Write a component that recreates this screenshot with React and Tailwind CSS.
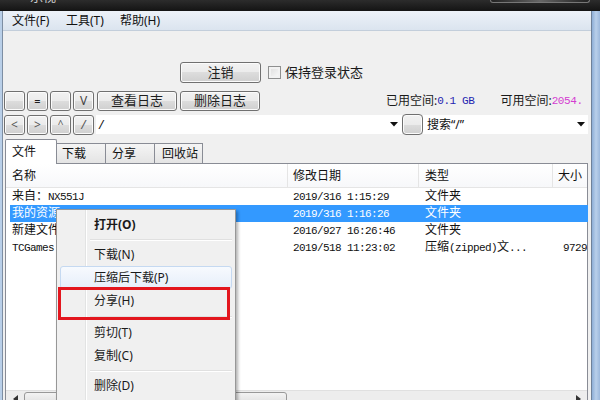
import React from 'react';

const ui = "font-['Noto_Sans','Noto_Sans_CJK_SC',sans-serif]";
const mono = "font-['Liberation_Mono','Noto_Sans_CJK_SC',monospace]";
const btnBg = 'bg-[linear-gradient(#f2f2f2,#ebebeb_50%,#dddddd_50%,#cfcfcf)]';

function Btn({ w, children, className = '' }) {
  return (
    <div className={`flex items-center justify-center shrink-0 rounded-[3px] border border-[#707070] ${btnBg} shadow-[inset_0_0_0_1px_#fbfbfb] text-[#1e1e1e] ${w} ${className}`}>
      {children}
    </div>
  );
}

function Arrow() {
  return (
    <svg width="8" height="5" viewBox="0 0 8 5" className="shrink-0">
      <polygon points="0,0 8,0 4,4.5" fill="#111" />
    </svg>
  );
}

function M({ children }) {
  return <span className="text-[11px] tracking-[-0.6px]">{children}</span>;
}

const rows = [
  { name: <>来自：<M>NX551J</M></>, date: '2019/316 1:15:29', type: '文件夹', size: '' },
  { name: '我的资源', date: '2019/316 1:16:26', type: '文件夹', size: '', sel: true },
  { name: '新建文件夹', date: '2016/927 16:26:46', type: '文件夹', size: '' },
  { name: <M>TCGames.zip</M>, date: '2019/518 11:23:02', type: <>压缩<M>(zipped)</M>文<M>...</M></>, size: '9729' },
];

function MenuItem({ children, bold, hover }) {
  return (
    <div className="h-[23px] px-[3px] flex">
      <div className={`flex-1 flex items-center pl-[33px] rounded-[3px] border ${hover ? 'border-[#c5d9f1] bg-linear-to-b from-[#f7fafe] to-[#e6eefa]' : 'border-transparent'}`}>
        <span className={`text-[12px] text-[#1a1a1a] ${bold ? 'font-bold' : ''}`}>{children}</span>
      </div>
    </div>
  );
}

function Sep({ h }) {
  return (
    <div className={`${h} flex items-center pl-[33px] pr-[3px]`}>
      <div className="flex-1 h-[2px] border-t border-[#e0e0e0] border-b border-b-white" />
    </div>
  );
}

export default function App() {
  return (
    <div className={`w-[600px] h-[400px] overflow-hidden relative bg-[#a9c3e2] flex flex-col ${ui}`}>
      {/* title bar */}
      <div className="h-[11px] shrink-0 bg-linear-to-b from-[#2c2c2c] to-[#141414] flex overflow-hidden">
        <span className="ml-[30px] -mt-[11px] text-[13px] leading-[14px] text-[#cfcfcf]">乐视</span>
        <div className="ml-auto mr-[10px] w-[100px] h-[3px] border-x border-b border-[#777] rounded-b-[3px] bg-linear-to-r from-[#222] via-[#666] to-[#222]" />
      </div>

      <div className="flex flex-1 min-h-0">
        <div className="w-[3px] bg-[#b9cfe8] border-r border-[#7d8ea3]" />
        <div className="w-[588px] flex flex-col bg-[#f0f0f0] overflow-hidden">
          {/* menu bar */}
          <div className="h-[20px] shrink-0 flex items-center pl-[9px] bg-linear-to-b from-[#edf2f8] to-[#dbe4ef] border-b border-[#c3cedb] text-[12px] text-[#111]">
            <span className="w-[54px]">文件(F)</span>
            <span className="w-[54px]">工具(T)</span>
            <span className="w-[54px]">帮助(H)</span>
          </div>

          {/* row 1 */}
          <div className="mt-[31px] h-[21px] flex items-center pl-[177px] shrink-0">
            <Btn w="w-[81px] h-[21px]" className="text-[13px]">注销</Btn>
            <div className="ml-[7px] w-[13px] h-[13px] border border-[#8e8f8f] bg-linear-to-br from-[#dcdcdc] to-[#fbfbfb] shadow-[inset_0_0_0_2px_#f2f2f2]" />
            <span className="ml-[4px] text-[13px] text-[#1a1a1a]">保持登录状态</span>
          </div>

          {/* row 2 */}
          <div className="mt-[8px] h-[20px] flex items-center pl-[1px] shrink-0 whitespace-nowrap overflow-hidden">
            <Btn w="w-[21px] h-[20px]" />
            <Btn w="w-[21px] h-[20px]" className="ml-[2px] text-[11px]">=</Btn>
            <Btn w="w-[21px] h-[20px]" className="ml-[2px]" />
            <Btn w="w-[21px] h-[20px]" className="ml-[2px] text-[12px] text-[#444]">V</Btn>
            <Btn w="w-[80px] h-[20px]" className="ml-[3px] text-[13px]">查看日志</Btn>
            <Btn w="w-[80px] h-[20px]" className="ml-[3px] text-[13px]">删除日志</Btn>
            <span className="ml-[126px] shrink-0 text-[12px] text-[#1a1a1a]">已用空间:</span>
            <span className={`${mono} shrink-0 text-[11px] tracking-[-0.4px] text-[#2424b0]`}>0.1 GB</span>
            <span className="ml-[26px] shrink-0 text-[12px] text-[#1a1a1a]">可用空间:</span>
            <span className={`${mono} shrink-0 text-[11px] tracking-[-0.4px] text-[#d43cd0]`}>2054.</span>
          </div>

          {/* row 3 */}
          <div className="mt-[3px] h-[21px] flex items-center pl-[1px] shrink-0 whitespace-nowrap">
            <Btn w="w-[21px] h-[20px]" className="text-[12px] text-[#555]">&lt;</Btn>
            <Btn w="w-[21px] h-[20px]" className="ml-[2px] text-[12px] text-[#555]">&gt;</Btn>
            <Btn w="w-[21px] h-[20px]" className="ml-[2px] text-[10px] text-[#555]">^</Btn>
            <Btn w="w-[21px] h-[20px]" className="ml-[2px] text-[12px] text-[#555] italic">/</Btn>
            <div className="ml-[2px] w-[306px] h-[19px] bg-white flex items-center pl-[3px] pr-[4px]">
              <span className="text-[12px] italic text-[#111]">/</span>
              <div className="ml-auto"><Arrow /></div>
            </div>
            <Btn w="w-[21px] h-[21px]" className="rounded-[4px] border-[#8a8a8a]" />
            <div className="w-[165px] h-[19px] bg-white flex items-center pl-[4px] pr-[3px]">
              <span className="text-[12px] text-[#111]">搜索“/”</span>
              <div className="ml-auto"><Arrow /></div>
            </div>
          </div>

          {/* tabs */}
          <div className="mt-[3px] h-[25px] flex items-end pl-[2px] shrink-0 text-[12px] text-[#111]">
            <div className="w-[52px] h-[25px] bg-white border-x border-t border-[#898c95] rounded-t-[2px] pl-[6px] pt-[3px] relative z-10 -mb-[1px]">文件</div>
            <div className="w-[49px] h-[20px] border-t border-r border-[#898c95] bg-linear-to-b from-[#f5f5f5] to-[#e4e4e4] pl-[5px] leading-[19px]">下载</div>
            <div className="w-[49px] h-[20px] border-t border-r border-[#898c95] bg-linear-to-b from-[#f5f5f5] to-[#e4e4e4] pl-[6px] leading-[19px]">分享</div>
            <div className="w-[48px] h-[20px] border-t border-r border-[#898c95] bg-linear-to-b from-[#f5f5f5] to-[#e4e4e4] pl-[7px] leading-[19px]">回收站</div>
          </div>

          {/* list */}
          <div className="ml-[2px] w-[583px] shrink-0 bg-white border border-[#898c95] flex flex-col text-[12px] text-[#111]">
            <div className="h-[24px] flex items-center border-b border-[#e5e5e5] bg-linear-to-b from-white to-[#f7f8fa]">
              <div className="w-[282px] shrink-0 pl-[6px] border-r border-[#e5e5e5] h-full flex items-center">名称</div>
              <div className="w-[131px] shrink-0 pl-[5px] border-r border-[#e5e5e5] h-full flex items-center">修改日期</div>
              <div className="w-[134px] shrink-0 pl-[6px] border-r border-[#e5e5e5] h-full flex items-center">类型</div>
              <div className="flex-1 pl-[5px] h-full flex items-center">大小</div>
            </div>
            <div className={`${mono} flex flex-col`}>
              {rows.map((r, i) => (
                <div key={i} className={`h-[17px] flex items-center whitespace-nowrap overflow-hidden ${r.sel ? 'bg-[#3399ff] text-white ml-[4px] -mr-[1px]' : 'ml-[4px]'}`}>
                  <div className="w-[278px] shrink-0 pl-[2px] text-[12px]">{r.name}</div>
                  <div className="w-[131px] shrink-0 pl-[5px]"><M>{r.date}</M></div>
                  <div className="w-[138px] shrink-0 pl-[6px] text-[12px]">{r.type}</div>
                  <div className="flex-1 min-w-0 overflow-hidden pl-[6px]"><M>{r.size}</M></div>
                </div>
              ))}
            </div>
            <div className="h-[134px]" />
            <div className="h-[17px] flex items-center bg-[#ededed] border-t border-[#e0e0e0]">
              <div className="w-[18px] flex justify-center">
                <svg width="5" height="8" viewBox="0 0 5 8"><polygon points="5,0 5,8 0,4" fill="#333" /></svg>
              </div>
              <div className="w-[263px] h-[15px] rounded-[3px] border border-[#989898] bg-linear-to-b from-[#f3f3f3] to-[#dcdcdc]" />
              <div className="ml-auto w-[18px] flex justify-center">
                <svg width="5" height="8" viewBox="0 0 5 8"><polygon points="0,0 0,8 5,4" fill="#333" /></svg>
              </div>
            </div>
          </div>
        </div>
        <div className="flex-1 bg-linear-to-r from-[#8eaed6] via-[#b9cfea] to-[#9cb8dc] border-l border-[#6f8199]" />
      </div>

      {/* context menu */}
      <div className="absolute left-[56px] top-[209px] w-[180px] h-[200px] bg-[#f0f0f0] border border-[#979797] shadow-[2px_2px_3px_rgba(0,0,0,0.3)] pt-[3px]">
        <div className="absolute left-[28px] top-0 bottom-0 w-[2px] border-l border-[#e2e3e3] border-r border-r-white" />
        <div className="relative">
          <MenuItem bold>打开(O)</MenuItem>
          <Sep h="h-[7px]" />
          <MenuItem>下载(N)</MenuItem>
          <MenuItem hover>压缩后下载(P)</MenuItem>
          <MenuItem>分享(H)</MenuItem>
          <Sep h="h-[9px]" />
          <MenuItem>剪切(T)</MenuItem>
          <MenuItem>复制(C)</MenuItem>
          <Sep h="h-[7px]" />
          <MenuItem>删除(D)</MenuItem>
        </div>
      </div>

      {/* red annotation box */}
      <div className="absolute left-[58px] top-[287px] w-[172px] h-[33px] border-[3px] border-[#e3161e]" />
    </div>
  );
}
